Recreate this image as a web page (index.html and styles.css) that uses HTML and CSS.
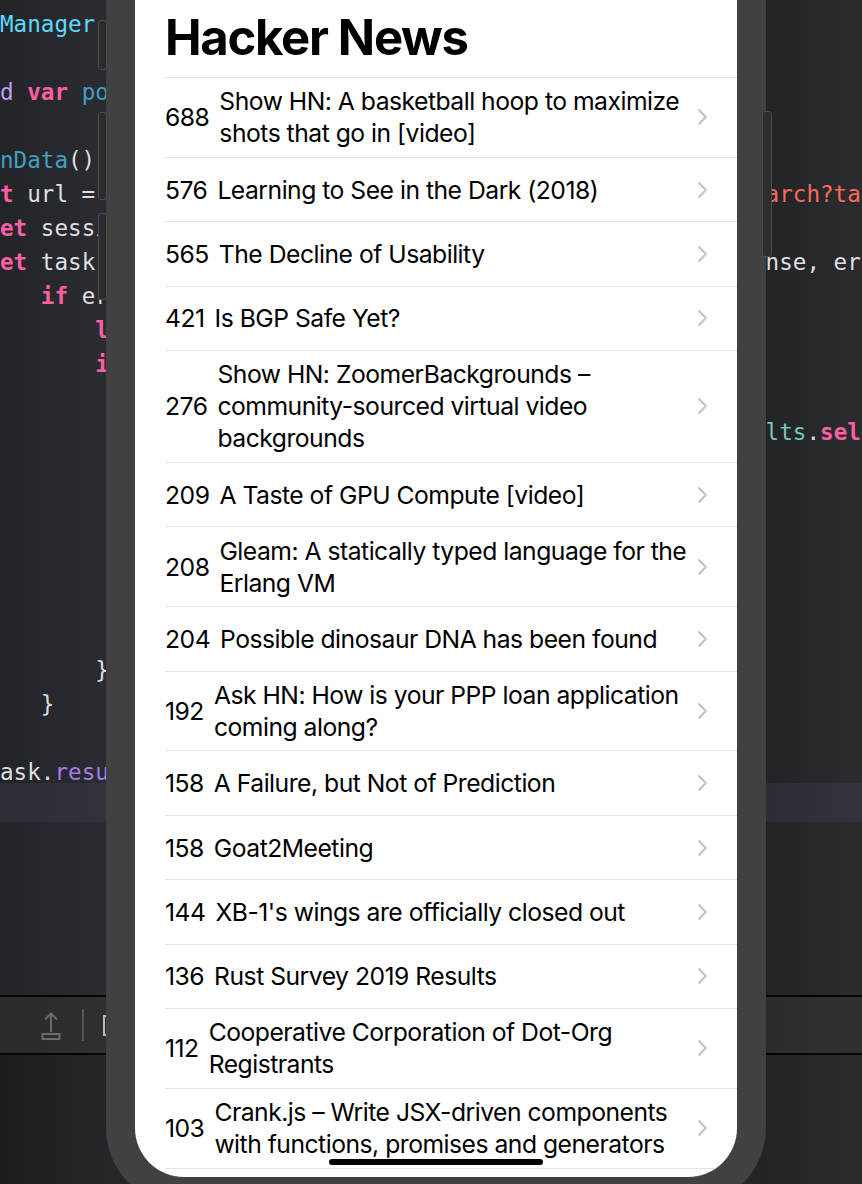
FILE: index.html
```html
<!DOCTYPE html>
<html lang="en">
<head>
<meta charset="utf-8">
<title>Hacker News</title>
<link rel="stylesheet" href="styles.css">
</head>
<body>
<div class="xcode">
  <div class="editor">
    <div class="line"><span class="l"><span class="ty">Manager</span>: ObservableObject {</span></div>
    <div class="line"></div>
    <div class="line"><span class="l"><span class="at">d</span> <span class="kw">var</span> <span class="dc">posts</span> = [Post]()</span></div>
    <div class="line"></div>
    <div class="line"><span class="l"><span class="dc">nData</span>() {</span></div>
    <div class="line"><span class="l"><span class="kw">t</span> url = URL(string: "https://hn.algolia.com/api/v1/se</span><span class="r"><span class="st">earch?tags=front_page"</span>) {</span></div>
    <div class="line"><span class="l"><span class="kw">et</span> session = URLSession(configuration: .default)</span></div>
    <div class="line"><span class="l"><span class="kw">et</span> task = session.dataTask(with: url) { (data, resp</span><span class="r">onse, error) <span class="kw">in</span></span></div>
    <div class="line"><span class="l">   <span class="kw">if</span> error == <span class="kw">nil</span> {</span></div>
    <div class="line"><span class="l">       <span class="kw">let</span> decoder = JSONDecoder()</span></div>
    <div class="line"><span class="l">       <span class="kw">if</span> <span class="kw">let</span> safeData = data {</span></div>
    <div class="line"></div>
    <div class="line"><span class="r"><span class="pt">ults</span>.<span class="kw">self</span>, from: safeData)</span></div>
    <div class="line"></div>
    <div class="line"></div>
    <div class="line"></div>
    <div class="line"></div>
    <div class="line"></div>
    <div class="line"></div>
    <div class="line"><span class="l">       }</span></div>
    <div class="line"><span class="l">   }</span></div>
    <div class="line"></div>
    <div class="line"><span class="l">ask.<span class="pp">resume</span>()</span></div>
    <div class="line cur"></div>
  </div>
  <div class="toolbar">
    <svg class="upload" width="20" height="30" viewBox="0 0 20 30" aria-hidden="true">
      <path d="M10 21V2.5M4 8.5L10 2.5L16 8.5" fill="none" stroke="#6b6c70" stroke-width="2"/>
      <rect x="1.5" y="23" width="17" height="5" fill="none" stroke="#6b6c70" stroke-width="2"/>
    </svg>
    <span class="tsep"></span>
    <span class="bracket"></span>
  </div>
  <div class="console"></div>
</div>

<div class="device">
  <span class="btn b1"></span>
  <span class="btn b2"></span>
  <span class="btn b3"></span>
  <span class="btn b4"></span>
  <div class="screen">
    <h1 class="title">Hacker News</h1>
    <ul class="list">
      <li class="row"><span class="pts">688</span><span class="ttl">Show HN: A basketball hoop to maximize shots that go in [video]</span><svg class="chev" viewBox="0 0 11 18"><path d="M2.2 2.2L8.8 9L2.2 15.8"/></svg></li>
      <li class="row"><span class="pts">576</span><span class="ttl">Learning to See in the Dark (2018)</span><svg class="chev" viewBox="0 0 11 18"><path d="M2.2 2.2L8.8 9L2.2 15.8"/></svg></li>
      <li class="row"><span class="pts">565</span><span class="ttl">The Decline of Usability</span><svg class="chev" viewBox="0 0 11 18"><path d="M2.2 2.2L8.8 9L2.2 15.8"/></svg></li>
      <li class="row"><span class="pts">421</span><span class="ttl">Is BGP Safe Yet?</span><svg class="chev" viewBox="0 0 11 18"><path d="M2.2 2.2L8.8 9L2.2 15.8"/></svg></li>
      <li class="row"><span class="pts">276</span><span class="ttl">Show HN: ZoomerBackgrounds – community-sourced virtual video backgrounds</span><svg class="chev" viewBox="0 0 11 18"><path d="M2.2 2.2L8.8 9L2.2 15.8"/></svg></li>
      <li class="row"><span class="pts">209</span><span class="ttl">A Taste of GPU Compute [video]</span><svg class="chev" viewBox="0 0 11 18"><path d="M2.2 2.2L8.8 9L2.2 15.8"/></svg></li>
      <li class="row"><span class="pts">208</span><span class="ttl">Gleam: A statically typed language for the Erlang VM</span><svg class="chev" viewBox="0 0 11 18"><path d="M2.2 2.2L8.8 9L2.2 15.8"/></svg></li>
      <li class="row"><span class="pts">204</span><span class="ttl">Possible dinosaur DNA has been found</span><svg class="chev" viewBox="0 0 11 18"><path d="M2.2 2.2L8.8 9L2.2 15.8"/></svg></li>
      <li class="row"><span class="pts">192</span><span class="ttl">Ask HN: How is your PPP loan application coming along?</span><svg class="chev" viewBox="0 0 11 18"><path d="M2.2 2.2L8.8 9L2.2 15.8"/></svg></li>
      <li class="row"><span class="pts">158</span><span class="ttl">A Failure, but Not of Prediction</span><svg class="chev" viewBox="0 0 11 18"><path d="M2.2 2.2L8.8 9L2.2 15.8"/></svg></li>
      <li class="row"><span class="pts">158</span><span class="ttl">Goat2Meeting</span><svg class="chev" viewBox="0 0 11 18"><path d="M2.2 2.2L8.8 9L2.2 15.8"/></svg></li>
      <li class="row"><span class="pts">144</span><span class="ttl">XB-1's wings are officially closed out</span><svg class="chev" viewBox="0 0 11 18"><path d="M2.2 2.2L8.8 9L2.2 15.8"/></svg></li>
      <li class="row"><span class="pts">136</span><span class="ttl">Rust Survey 2019 Results</span><svg class="chev" viewBox="0 0 11 18"><path d="M2.2 2.2L8.8 9L2.2 15.8"/></svg></li>
      <li class="row"><span class="pts">112</span><span class="ttl">Cooperative Corporation of Dot-Org Registrants</span><svg class="chev" viewBox="0 0 11 18"><path d="M2.2 2.2L8.8 9L2.2 15.8"/></svg></li>
      <li class="row"><span class="pts">103</span><span class="ttl">Crank.js – Write JSX-driven components with functions, promises and generators</span><svg class="chev" viewBox="0 0 11 18"><path d="M2.2 2.2L8.8 9L2.2 15.8"/></svg></li>
      <li class="row"><span class="pts">98</span><span class="ttl">Show HN: Pinboard for your terminal</span><svg class="chev" viewBox="0 0 11 18"><path d="M2.2 2.2L8.8 9L2.2 15.8"/></svg></li>
    </ul>
    <span class="home"></span>
  </div>
</div>
</body>
</html>
```

FILE: styles.css
```css
html, body {
  margin: 0;
  padding: 0;
}

body {
  width: 862px;
  height: 1184px;
  overflow: hidden;
  position: relative;
  background: #292a2f;
}

/* ---------- Xcode background ---------- */
.xcode {
  display: flex;
  flex-direction: column;
  height: 1184px;
}

.editor {
  height: 995px;
  box-sizing: border-box;
  padding-top: 7px;
  background: linear-gradient(90deg, #232428 0px, #2b2c31 104px, #2b2c31 700px, #222327 766px, #2b2c30 862px);
  font-family: "DejaVu Sans Mono", "Liberation Mono", monospace;
  font-size: 22.6px;
  color: #dfdfe0;
}

.line {
  display: grid;
  grid-template-columns: 106px 646px 110px;
  height: 34px;
  line-height: 34px;
  white-space: pre;
}

.line .l {
  grid-column: 1;
  overflow: hidden;
}

.line .r {
  grid-column: 3;
  overflow: hidden;
}

.line.cur {
  height: 39px;
  margin-top: -6px;
  background: linear-gradient(90deg, #2c2e35 0px, #31333b 104px, #2c2d34 766px, #32343d 862px);
}

.kw { color: #fc5fa3; font-weight: bold; }
.st { color: #fc6a5d; }
.ty { color: #5dd8ff; }
.dc { color: #41a1c0; }
.at { color: #c29ef0; }
.pp { color: #a87ce8; }
.pt { color: #72c9b4; }

.toolbar {
  height: 56px;
  border-top: 2px solid #060607;
  border-bottom: 2px solid #060607;
  background: linear-gradient(90deg, #2a2b2f 0px, #2e2f33 104px, #2b2c30 766px, #303135 862px);
  display: flex;
  align-items: center;
  padding-left: 41px;
}

.upload {
  display: block;
  margin-top: 1px;
}

.tsep {
  width: 2px;
  height: 32px;
  background: #55565a;
  margin-left: 21px;
}

.bracket {
  width: 7px;
  height: 17px;
  border: 2px solid #b9b9bd;
  border-right: none;
  margin-left: 19px;
}

.console {
  flex: 1;
  background: linear-gradient(90deg, #1c1d20 0px, #25262a 104px, #25262a 700px, #222327 766px, #2b2c30 862px);
}

/* ---------- Simulator device ---------- */
.device {
  position: absolute;
  left: 106px;
  top: -100px;
  width: 660px;
  height: 1306px;
  box-sizing: border-box;
  padding: 29px;
  background: #414141;
  border-radius: 78px;
}

.btn {
  position: absolute;
  box-sizing: border-box;
  background: #2c2c2e;
  border: 1px solid #4c4c4e;
  border-radius: 3px;
}

.b1 { left: -8px; top: 120px; width: 9px; height: 50px; }
.b2 { left: -8px; top: 212px; width: 9px; height: 88px; }
.b3 { left: -8px; top: 313px; width: 9px; height: 87px; }
.b4 { right: -6px; top: 211px; width: 10px; height: 146px; }

.screen {
  position: relative;
  height: 100%;
  background: #ffffff;
  border-radius: 49px;
  overflow: hidden;
  font-family: Inter, "Noto Sans", "Liberation Sans", sans-serif;
  color: #000;
}

.title {
  margin: 0 0 9px 0;
  padding: 79px 0 0 30px;
  font-size: 49px;
  line-height: 60px;
  font-weight: 700;
  letter-spacing: -1.3px;
}

.list {
  list-style: none;
  margin: 0 0 0 30px;
  padding: 0;
  border-top: 1px solid #e4e4e6;
}

.row {
  display: flex;
  align-items: center;
  box-sizing: border-box;
  min-height: 64.4px;
  padding: 7.45px 29px 7.45px 0;
  border-bottom: 1px solid #e4e4e6;
  font-size: 24.7px;
  line-height: 32px;
  letter-spacing: -0.5px;
}

.pts {
  flex: none;
  margin-right: 10px;
}

.ttl {
  flex: 1;
}

.chev {
  flex: none;
  width: 11px;
  height: 18px;
  margin-left: 10px;
}

.chev path {
  fill: none;
  stroke: #c4c4c7;
  stroke-width: 2.2;
  stroke-linecap: round;
  stroke-linejoin: round;
}

.home {
  position: absolute;
  left: 50%;
  bottom: 12px;
  width: 214px;
  height: 6px;
  margin-left: -107px;
  border-radius: 3px;
  background: #000;
}
```
